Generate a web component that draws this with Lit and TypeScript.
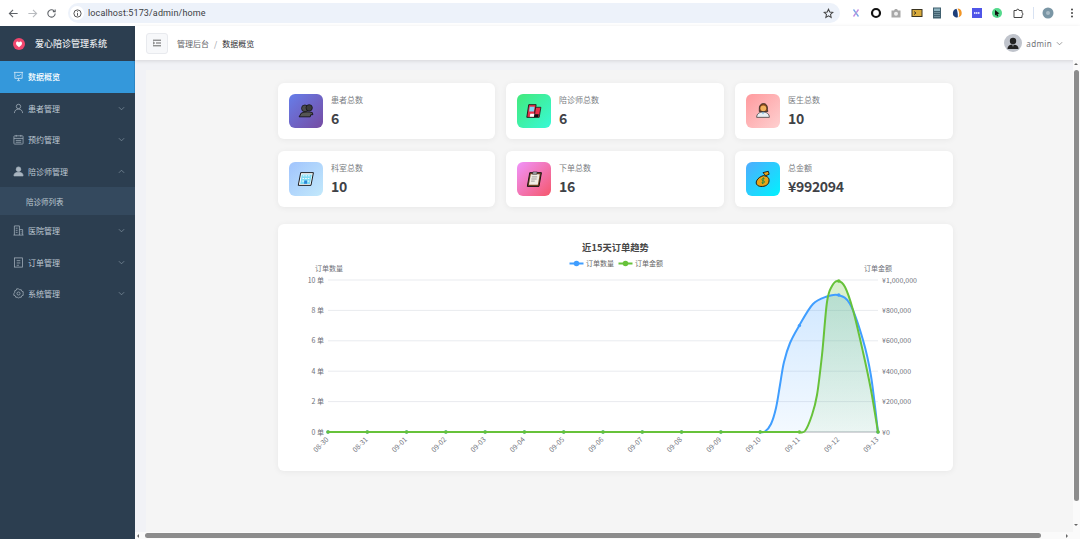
import { LitElement, html, css, svg } from 'lit';
import { customElement } from 'lit/decorators.js';

type Pt = [number, number];

const X0 = 328;
const STEP = 550 / 14;
const days = ['08-30', '08-31', '09-01', '09-02', '09-03', '09-04', '09-05', '09-06', '09-07', '09-08', '09-09', '09-10', '09-11', '09-12', '09-13'];

// traced from the chart, the curve only needs to run through these
const blueLine: Pt[] = [[328, 432], [760, 432], [765, 431.5], [771, 424], [776, 408], [780, 385], [784, 362], [790, 343], [799, 326], [813, 304], [827, 296.5], [838, 295], [850, 304], [863, 340], [871, 376], [878, 432]];
const greenLine: Pt[] = [[328, 432], [799, 432], [805, 431], [812, 415], [817, 395], [822, 355], [827, 302], [832, 286], [838, 281], [845, 287], [853, 310], [863, 352], [871, 390], [878, 432]];
const blueDots = days.map((_, i) => X0 + i * STEP).map((x, i) => [x, i === 12 ? 325.6 : i === 13 ? 295 : 432] as Pt);
const greenDots = days.map((_, i) => X0 + i * STEP).map((x, i) => [x, i === 13 ? 281 : 432] as Pt);

function curve(p: Pt[]) {
  let d = `M${p[0][0]} ${p[0][1]}`;
  for (let i = 0; i < p.length - 1; i++) {
    // the long flat stretch must not pull on its neighbours
    const a = i === 0 || p[i][0] - p[i - 1][0] > 100 ? p[i] : p[i - 1];
    const b = p[i];
    const c = p[i + 1];
    const e = p[Math.min(i + 2, p.length - 1)];
    const k = c[0] - b[0] > 100 ? 0 : 1 / 6;
    d += ` C${(b[0] + (c[0] - a[0]) * k).toFixed(1)} ${(b[1] + (c[1] - a[1]) * k).toFixed(1)} ${(c[0] - (e[0] - b[0]) * k).toFixed(1)} ${(c[1] - (e[1] - b[1]) * k).toFixed(1)} ${c[0]} ${c[1]}`;
  }
  return d;
}

const ico = (body: unknown) => html`<svg class="mi" viewBox="0 0 12 12" fill="none" stroke="currentColor" stroke-width=".8">${body}</svg>`;

const menuIcons = {
  chart: ico(svg`<path d="M1 1.500h10M2 1.500v6.500h8V1.500M6 8v2M4.500 10.500h3M3.600 6l1.600-1.600 1.200 1 2-2"/>`),
  user: ico(svg`<circle cx="6" cy="3.800" r="2.400"/><path d="M1.500 11c.3-3 2-4.300 4.500-4.300s4.200 1.300 4.500 4.300"/>`),
  cal: ico(svg`<rect x="1" y="2" width="10" height="9" rx=".8"/><path d="M1 4.800h10M3.500 1v2M8.500 1v2M3 7h6M3 9h6"/>`),
  person: ico(svg`<circle cx="6" cy="3.500" r="2.500" fill="currentColor"/><path d="M1 10.800c0-3 2.200-4 5-4s5 1 5 4z" fill="currentColor"/>`),
  hosp: ico(svg`<path d="M1.500 11V1h5.500v10M7 5h3.500v6M.5 11h11M3 3.500h2M3 5.800h2M3 8h2M8.500 7h.8M8.500 9h.8"/>`),
  doc: ico(svg`<rect x="1.500" y="1" width="9" height="10"/><path d="M4 4h4M4 6.500h4M4 9h2.500"/>`),
  gear: ico(svg`<circle cx="6" cy="6" r="1.700"/><path d="M6 .8l1.200 1.300 1.700-.3.600 1.700 1.700.6-.3 1.700L11.200 6l-.3.200.3 1.700-1.700.6-.6 1.700-1.700-.3L6 11.200l-1.200-1.300-1.700.3-.6-1.700-1.700-.6.300-1.700L.8 6l1.300-1.200-.3-1.700 1.700-.6.6-1.700 1.700.3z"/>`),
};

const chevron = (up = false) => html`<svg class="chev" viewBox="0 0 8 5" fill="none" stroke="currentColor" stroke-width=".8"><path d=${up ? 'M1 4l3-3 3 3' : 'M1 1l3 3 3-3'}/></svg>`;

const statIcons = [
  svg`<circle cx="7.500" cy="6" r="3.200" fill="#4a4a4a" stroke="#111" stroke-width=".7"/><circle cx="11.500" cy="5.500" r="3" fill="#3a3a3a" stroke="#111" stroke-width=".7"/><path d="M4 10.500c3-1.500 8-1.500 10.500-.5l.5 2H13l-.5 2H2z" fill="#555" stroke="#111" stroke-width=".8"/>`,
  svg`<path d="M3.500 2.500h7l-1.800 12h-7z" fill="#e8304a" stroke="#111" stroke-width=".8"/><path d="M4.500 4.500h4.500l-.6 4.500h-4.500z" fill="#7fd4f5"/><path d="M10 5h5l-1.600 9.500H8.700z" fill="#e8304a" stroke="#111" stroke-width=".7"/><path d="M5 11h4l-.4 3H4.500z" fill="#fff"/><path d="M9 11.500h4l-.5 3h-4z" fill="#111"/>`,
  svg`<path d="M5 7c-.4-3.500 1.500-5.500 4-5.500s4 2 3.700 5.500l.3 2H5z" fill="#8a4a1c" stroke="#222" stroke-width=".7"/><circle cx="8.800" cy="6" r="2.700" fill="#f2b15c"/><path d="M2.500 14.500c0-3.300 2.500-5 6-5s6 1.700 6 5z" fill="#e9eef3" stroke="#333" stroke-width=".7"/><path d="M7.500 9.800h2l-1 2z" fill="#6db5e0"/>`,
  svg`<path d="M3.500 2.500h12l-2.300 12H1.200z" fill="#fff" stroke="#111" stroke-width=".9"/><path d="M4.500 4.200h9.500l-1.700 9H3z" fill="#7fdcf5"/><path d="M5.500 5.500h1.500M8 5.500h1.500M10.500 5.500H12M5.200 8H6.700M7.700 8h1.500M10.200 8h1.500M5 10.500h1.500M10 10.500h1.500" stroke="#fff" stroke-width=".9"/><path d="M7 10h2.500v3H6.600z" fill="#2b86d8"/>`,
  svg`<path d="M4.500 2.500h11l-2.300 13H2.200z" fill="#7a4a24" stroke="#111" stroke-width=".9"/><path d="M5.500 4h8.400l-1.800 10H3.700z" fill="#f1ede4"/><path d="M7.500 1.800h4l-.4 2.200h-4z" fill="#a9acb2" stroke="#222" stroke-width=".5"/><path d="M6.500 6.500h5M6 8.500h5M5.700 10.500h3.500" stroke="#888" stroke-width=".7"/>`,
  svg`<path d="M8.500 2.500l5-1.300.8 2.800-3.300 1.400z" fill="#e8a317" stroke="#111" stroke-width=".8"/><path d="M9 5.300c3 .6 5.500 1.500 5.200 5C14 14 10.500 15.800 6.500 15.500 3 15.300 1.300 13 2.500 10.200 3.500 8 6 6 9 5.300z" fill="#e8a317" stroke="#111" stroke-width=".9"/><path d="M10 8.200c-1-.7-2.600-.2-2.500 1 .1 1.200 2.500.8 2.500 2 0 1.100-1.700 1.400-2.800.7M9 7l-1 6.300" stroke="#2c8a3e" stroke-width=".9" fill="none"/>`,
];

const stats = [
  { label: '患者总数', value: '6', tone: 'a' },
  { label: '陪诊师总数', value: '6', tone: 'b' },
  { label: '医生总数', value: '10', tone: 'c' },
  { label: '科室总数', value: '10', tone: 'd' },
  { label: '下单总数', value: '16', tone: 'e' },
  { label: '总金额', value: '¥992094', tone: 'f' },
];

const grid = [
  { y: 280, l: '10 单', r: '¥1,000,000' },
  { y: 310.4, l: '8 单', r: '¥800,000' },
  { y: 340.8, l: '6 单', r: '¥600,000' },
  { y: 371.2, l: '4 单', r: '¥400,000' },
  { y: 401.6, l: '2 单', r: '¥200,000' },
  { y: 432, l: '0 单', r: '¥0' },
];

@customElement('app-root')
export class AppRoot extends LitElement {
  static styles = css`
    :host {
      display: block;
      width: 1080px;
      height: 539px;
      overflow: hidden;
      font-family: 'Noto Sans CJK SC', 'Noto Sans', sans-serif;
    }

    .page { display: flex; flex-direction: column; height: 100%; }

    /* browser bar */
    .chrome {
      height: 26px;
      flex: none;
      display: flex;
      align-items: center;
      background: #fff;
      color: #5f6368;
    }
    .nav { width: 11px; height: 11px; margin-left: 8px; flex: none; }
    .nav.off { color: #b8bbbf; }
    .omni {
      margin-left: 11px;
      width: 772px;
      height: 20px;
      flex: none;
      border-radius: 10px;
      background: #edf2fa;
      display: flex;
      align-items: center;
      font: 9px Roboto, sans-serif;
      color: #3c4043;
    }
    .site {
      width: 14px;
      height: 14px;
      margin: 0 4px 0 2px;
      border-radius: 50%;
      background: #fff;
      display: flex;
      align-items: center;
      justify-content: center;
    }
    .site svg { width: 9px; height: 9px; }
    .url { flex: 1; letter-spacing: .13px; }
    .star { width: 11px; height: 11px; margin-right: 6px; color: #444; }
    .exts { display: flex; align-items: center; margin-left: 10px; }
    .exts svg { width: 12px; height: 12px; margin-right: 8.200px; flex: none; }
    .exts svg.sep { width: 1px; height: 12px; margin: 0 8px 0 1px; }
    .exts svg.more { margin-left: 4px; }

    .app { flex: 1; display: flex; min-height: 0; }

    /* sidebar */
    .side { width: 135px; flex: none; background: #2c3e50; color: #bfc9d3; }
    .brand {
      height: 35px;
      display: flex;
      align-items: center;
      padding-left: 13px;
      color: #e6e9ec;
      font-size: 9px;
      font-weight: 500;
    }
    .brand svg { width: 12px; height: 12px; margin-right: 10px; }
    .item {
      height: 31.500px;
      display: flex;
      align-items: center;
      padding: 0 10px 0 13px;
      font-size: 8px;
    }
    .item .mi { width: 11px; height: 11px; margin-right: 4px; flex: none; color: #a9b5c0; }
    .item span { flex: 1; }
    .item.on {
      background: #3498db;
      color: #fff;
      border-right: 1.500px solid #2b86c5;
      font-weight: 500;
    }
    .item.on .mi { color: #e8f3fb; }
    .chev { width: 7px; height: 5px; color: #8595a4; flex: none; }
    .sub {
      height: 28px;
      display: flex;
      align-items: center;
      padding-left: 26px;
      background: #34495e;
      font-size: 7.500px;
    }

    .main { flex: 1; min-width: 0; display: flex; flex-direction: column; }
    .top {
      height: 34px;
      flex: none;
      display: flex;
      align-items: center;
      background: #fff;
      box-shadow: 0 1px 4px rgba(0, 0, 0, .12);
      position: relative;
      padding: 0 17px 0 11px;
      font-size: 8px;
      color: #606266;
    }
    .toggle {
      width: 22px;
      height: 21px;
      box-sizing: border-box;
      border: 1px solid #e8eaee;
      border-radius: 3px;
      background: #f7f8fa;
      display: flex;
      align-items: center;
      justify-content: center;
      margin-right: 9px;
    }
    .toggle svg { width: 8px; height: 8px; }
    .crumb { color: #303133; }
    .slash { margin: 0 5px; color: #909399; }
    .grow { flex: 1; }
    .avatar {
      width: 18px;
      height: 18px;
      border-radius: 50%;
      background: #c0c4cc;
      overflow: hidden;
      margin-right: 4px;
    }
    .avatar svg { display: block; width: 18px; height: 18px; }
    .who { font: 8px 'Noto Sans', sans-serif; letter-spacing: .35px; margin-right: 4px; color: #707378; }
    .who + .chev { width: 7px; color: #777; }

    .frame {
      flex: 1;
      min-height: 0;
      display: grid;
      grid-template-columns: 1fr 7px;
      grid-template-rows: 1fr 7px;
      background: #f1f2f6;
    }
    .content {
      margin: 10px 0 0 11px;
      padding: 13px 0 0 132px;
      background: #f5f5f5;
      overflow: hidden;
    }
    .inner { width: 675px; }
    .stats {
      display: grid;
      grid-template-columns: 217px 218px 218px;
      grid-auto-rows: 56px;
      gap: 12px 11px;
    }
    .stat {
      display: flex;
      align-items: center;
      padding: 0 11px;
      background: #fff;
      border-radius: 6px;
      box-shadow: 0 1px 6px rgba(0, 0, 0, .06);
    }
    .badge {
      width: 34px;
      height: 34px;
      border-radius: 6px;
      display: flex;
      align-items: center;
      justify-content: center;
      margin-right: 8px;
      flex: none;
    }
    .badge svg { width: 18px; height: 18px; }
    .a { background: linear-gradient(135deg, #667eea, #764ba2); }
    .b { background: linear-gradient(135deg, #43e97b, #38f9d7); }
    .c { background: linear-gradient(135deg, #ff9a9e, #fed0d0); }
    .d { background: linear-gradient(135deg, #a1c4fd, #c2e9fb); }
    .e { background: linear-gradient(135deg, #f093fb, #f5576c); }
    .f { background: linear-gradient(135deg, #4facfe, #00f2fe); }
    .label { font-size: 8px; line-height: 11px; color: #7a7d82; }
    .value { font-size: 14px; line-height: 20px; margin-top: 3px; font-weight: 700; letter-spacing: -.3px; color: #3f4247; }
    .chart {
      margin-top: 17px;
      height: 247px;
      background: #fff;
      border-radius: 6px;
      box-shadow: 0 1px 6px rgba(0, 0, 0, .06);
    }
    .chart svg { display: block; width: 675px; height: 247px; }
    .chart text { font-family: 'Noto Sans CJK SC', 'Noto Sans', sans-serif; font-size: 7px; fill: #6e7079; }
    .chart text.title { font-size: 9.300px; font-weight: 700; fill: #464646; }
    .chart text.leg { font-size: 7px; fill: #666; }

    .vbar, .hbar { background: #fafafa; position: relative; }
    .vbar { grid-row: 1; grid-column: 2; display: flex; flex-direction: column; align-items: center; }
    .vbar i { width: 5px; height: 431px; margin-top: 10px; border-radius: 3px; background: #8c8c8c; }
    .hbar { grid-row: 2; grid-column: 1 / 3; display: flex; align-items: center; }
    .hbar i { width: 896px; height: 5px; margin-left: 10px; border-radius: 3px; background: #8c8c8c; }
    .arr { position: absolute; width: 0; height: 0; border: 2.500px solid transparent; }
    .arr.up { top: 1px; left: 1px; border-bottom-color: #666; }
    .arr.down { bottom: 4px; left: 1px; border-top-color: #666; }
    .arr.left { left: 0; border-right-color: #666; }
    .arr.right { right: 10px; border-left-color: #666; }
  `;

  renderChart() {
    const blue = curve(blueLine);
    const green = curve(greenLine);
    return html`<svg viewBox="278 224 675 247">
      <defs>
        <linearGradient id="gb" x1="0" y1="0" x2="0" y2="1">
          <stop offset="0" stop-color="#409eff" stop-opacity=".24"/>
          <stop offset="1" stop-color="#409eff" stop-opacity=".06"/>
        </linearGradient>
        <linearGradient id="gg" x1="0" y1="0" x2="0" y2="1">
          <stop offset="0" stop-color="#67c23a" stop-opacity=".26"/>
          <stop offset="1" stop-color="#67c23a" stop-opacity=".06"/>
        </linearGradient>
      </defs>
      <text class="title" x="615.500" y="250.500" text-anchor="middle">近15天订单趋势</text>
      <path d="M569.500 263.500h14" stroke="#409eff" stroke-width="2"/><circle cx="576.500" cy="263.500" r="2.800" fill="#409eff"/>
      <text class="leg" x="586" y="266">订单数量</text>
      <path d="M618.500 263.500h14" stroke="#67c23a" stroke-width="2"/><circle cx="625.500" cy="263.500" r="2.800" fill="#67c23a"/>
      <text class="leg" x="635" y="266">订单金额</text>
      <text x="329" y="270.500" text-anchor="middle">订单数量</text>
      <text x="878" y="270.500" text-anchor="middle">订单金额</text>
      ${grid.map((g) => svg`
        ${g.y < 432 ? svg`<path d="M328 ${g.y}H878" stroke="#e9ebef" stroke-width="1"/>` : svg`<path d="M328 ${g.y}H878" stroke="#a9acb3" stroke-width="1"/>`}
        <text x="324" y=${g.y + 2.500} text-anchor="end">${g.l}</text>
        <text x="882" y=${g.y + 2.500}>${g.r}</text>
      `)}
      ${days.map((d, i) => {
        const x = X0 + i * STEP;
        return svg`<text transform="translate(${x + 1} 440) rotate(-45)" text-anchor="end">${d}</text>`;
      })}
      <path d="${blue} L878 432 L328 432Z" fill="url(#gb)"/>
      <path d="${green} L878 432 L328 432Z" fill="url(#gg)"/>
      <path d=${blue} fill="none" stroke="#409eff" stroke-width="2"/>
      ${blueDots.map((p) => svg`<circle cx=${p[0]} cy=${p[1]} r="1.700" fill="#409eff"/>`)}
      <path d=${green} fill="none" stroke="#67c23a" stroke-width="2"/>
      ${greenDots.map((p) => svg`<circle cx=${p[0]} cy=${p[1]} r="1.800" fill="#67c23a"/>`)}
    </svg>`;
  }

  renderChrome() {
    return html`<div class="chrome">
      <svg class="nav" viewBox="0 0 12 12" fill="none" stroke="currentColor" stroke-width="1.200"><path d="M10.500 6h-9M5.500 2l-4 4 4 4"/></svg>
      <svg class="nav off" viewBox="0 0 12 12" fill="none" stroke="currentColor" stroke-width="1.200"><path d="M1.500 6h9M6.500 2l4 4-4 4"/></svg>
      <svg class="nav" viewBox="0 0 12 12" fill="none" stroke="currentColor" stroke-width="1.200"><path d="M10 6a4 4 0 1 1-1.200-2.900M10 1.500v2.500H7.500"/></svg>
      <div class="omni">
        <div class="site"><svg viewBox="0 0 10 10" fill="none" stroke="#444" stroke-width="1"><circle cx="5" cy="5" r="4"/><path d="M5 4.500v3M5 2.500v1"/></svg></div>
        <span class="url">localhost:5173/admin/home</span>
        <svg class="star" viewBox="0 0 12 12" fill="none" stroke="currentColor" stroke-width="1.100"><path d="M6 1.300l1.400 3.100 3.300.4-2.500 2.200.7 3.300L6 8.600l-2.900 1.700.7-3.300L1.300 4.800l3.300-.4z"/></svg>
      </div>
      <div class="exts">
        <svg viewBox="0 0 12 12" fill="none" stroke-width="1.300"><path d="M3.500 2.500l5 7" stroke="#7aa7e8"/><path d="M8.500 2.500l-5 7" stroke="#c58be0"/><path d="M6 5.500v1" stroke="#6fd0c0"/></svg>
        <svg viewBox="0 0 12 12" fill="none" stroke="#111" stroke-width="2.200"><circle cx="6" cy="6" r="4"/></svg>
        <svg viewBox="0 0 12 12"><path d="M1.500 3.500h2.500l1-1.500h2l1 1.500h2.500v7h-9z" fill="#a8a8a8"/><circle cx="6" cy="6.800" r="2" fill="#eee"/></svg>
        <svg viewBox="0 0 12 12"><rect x=".5" y="2" width="11" height="8" fill="#3a3320"/><rect x="1.500" y="3" width="9" height="6" fill="#d9ab3c"/><path d="M3 4.500l2 1.500-2 1.500" stroke="#222" fill="none" stroke-width=".8"/></svg>
        <svg viewBox="0 0 12 12"><rect x="2" y=".5" width="8" height="11" fill="#41606f"/><rect x="3" y="1.500" width="6" height="2.500" fill="#8fb3bf"/><path d="M3.500 5.500h5M3.500 7.500h5M3.500 9.500h5" stroke="#a3c0ca" stroke-dasharray="1 1"/></svg>
        <svg viewBox="0 0 12 12"><path d="M6.500 1.500a4.500 4.500 0 0 1 1 8.800C9 7.500 8 4 6.500 1.500z" fill="#f29525"/><path d="M5.500 1.800a4.500 4.500 0 0 0-1 8.500c.8.300 2 .3 2.300-.3C7 7.500 6.500 4 5.500 1.800z" fill="#1d3f7a"/></svg>
        <svg viewBox="0 0 12 12"><rect x="1" y="1" width="10" height="10" fill="#4f55e8"/><path d="M3 6h6" stroke="#d5d7ff" stroke-width="1.800" stroke-dasharray="1.500 .5"/></svg>
        <svg viewBox="0 0 12 12"><circle cx="6" cy="6" r="5" fill="#54d98c"/><path d="M4 3l4.500 3.500-2 .5 .8 2-1.300.5-.8-2-1.200 1z" fill="#111"/></svg>
        <svg viewBox="0 0 12 12" fill="none" stroke="#444" stroke-width="1"><path d="M2 3.500h2.500a1.300 1.300 0 0 1 2.600 0H10v2.300a1.300 1.300 0 0 1 0 2.500V10.500H2z"/></svg>
        <svg class="sep" viewBox="0 0 1 12"><path d="M.5 0v12" stroke="#d8e2f2"/></svg>
        <svg viewBox="0 0 12 12"><circle cx="6" cy="6" r="5.500" fill="#7a96a5"/><circle cx="6" cy="6" r="2" fill="#a9bcc7"/></svg>
        <svg class="more" viewBox="0 0 12 12"><circle cx="6" cy="2.500" r="1" fill="#444"/><circle cx="6" cy="6" r="1" fill="#444"/><circle cx="6" cy="9.500" r="1" fill="#444"/></svg>
      </div>
    </div>`;
  }

  renderSide() {
    const row = (icon: unknown, text: string, up = false) =>
      html`<div class="item">${icon}<span>${text}</span>${chevron(up)}</div>`;
    return html`<aside class="side">
      <div class="brand">
        <svg viewBox="0 0 12 12"><circle cx="6" cy="6" r="6" fill="#f0466e"/><path d="M6 9.200C3.800 7.700 3 6.600 3 5.300 3 3.500 5.200 3 6 4.500 6.800 3 9 3.500 9 5.300c0 1.300-.8 2.400-3 3.900z" fill="#fff"/></svg>
        爱心陪诊管理系统
      </div>
      <div class="item on">${menuIcons.chart}<span>数据概览</span></div>
      ${row(menuIcons.user, '患者管理')}
      ${row(menuIcons.cal, '预约管理')}
      ${row(menuIcons.person, '陪诊师管理', true)}
      <div class="sub">陪诊师列表</div>
      ${row(menuIcons.hosp, '医院管理')}
      ${row(menuIcons.doc, '订单管理')}
      ${row(menuIcons.gear, '系统管理')}
    </aside>`;
  }

  render() {
    return html`<div class="page">
      ${this.renderChrome()}
      <div class="app">
        ${this.renderSide()}
        <div class="main">
          <header class="top">
            <div class="toggle"><svg viewBox="0 0 8 8" fill="none" stroke="#555" stroke-width=".9"><path d="M0 1.200h8M3 4h5M0 6.800h8M0 2.800L1.500 4 0 5.200"/></svg></div>
            <span>管理后台</span><span class="slash">/</span><span class="crumb">数据概览</span>
            <div class="grow"></div>
            <div class="avatar"><svg viewBox="0 0 18 18"><circle cx="9" cy="7" r="3.200" fill="#222"/><path d="M3.500 15c0-3.300 2.500-4.500 5.500-4.500s5.500 1.200 5.500 4.500z" fill="#222"/><path d="M8.300 10.500h1.400L9 13z" fill="#c0c4cc"/></svg></div>
            <span class="who">admin</span>
            ${chevron()}
          </header>
          <div class="frame">
            <div class="content">
              <div class="inner">
                <div class="stats">
                  ${stats.map((s, i) => html`<div class="stat">
                    <div class="badge ${s.tone}"><svg viewBox="0 0 17 17">${statIcons[i]}</svg></div>
                    <div>
                      <div class="label">${s.label}</div>
                      <div class="value">${s.value}</div>
                    </div>
                  </div>`)}
                </div>
                <div class="chart">${this.renderChart()}</div>
              </div>
            </div>
            <div class="vbar"><b class="arr up"></b><i></i><b class="arr down"></b></div>
            <div class="hbar"><b class="arr left"></b><i></i><b class="arr right"></b></div>
          </div>
        </div>
      </div>
    </div>`;
  }
}
